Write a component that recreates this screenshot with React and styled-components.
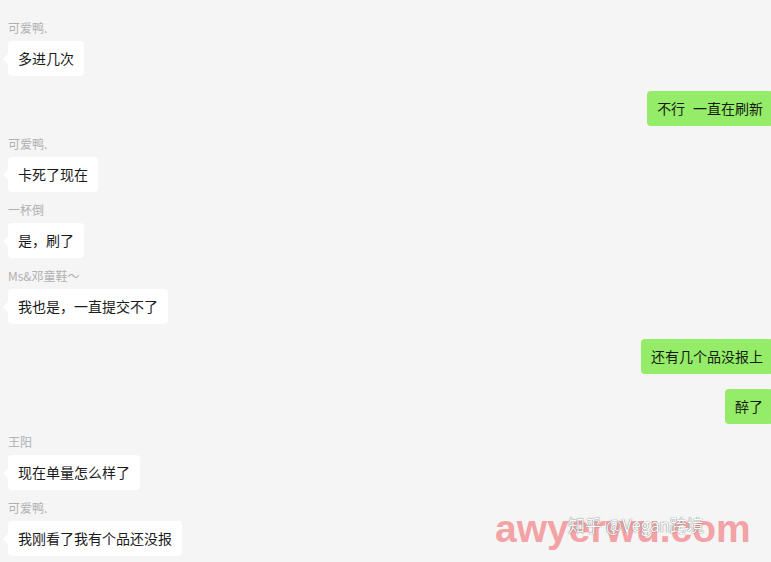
import React from 'react'
import styled, { createGlobalStyle } from 'styled-components'

const GlobalStyle = createGlobalStyle`
  html, body {
    margin: 0;
    padding: 0;
    background: #f5f5f5;
    overflow: hidden;
  }
  body {
    font-family: "Noto Sans CJK SC", "Noto Sans", sans-serif;
  }
`

const messages = [
  { name: '可爱鸭.', text: '多进几次' },
  { self: true, text: '不行\u2002\u200a一直在刷新' },
  { name: '可爱鸭.', text: '卡死了现在' },
  { name: '一杯倒', text: '是，刷了' },
  { name: 'Ms&邓童鞋～', text: '我也是，一直提交不了' },
  { self: true, text: '还有几个品没报上' },
  { self: true, text: '醉了' },
  { name: '王阳', text: '现在单量怎么样了' },
  { name: '可爱鸭.', text: '我刚看了我有个品还没报' },
]

function App() {
  return (
    <Page>
      <GlobalStyle />
      <Chat>
        {messages.map((m, i) => (
          <Row key={i} self={m.self}>
            {m.name && <Name>{m.name}</Name>}
            <Bubble self={m.self}>{m.text}</Bubble>
          </Row>
        ))}
      </Chat>

      <Watermark>awyerwu.com</Watermark>
      <Credit>知乎 @Vegan跨境</Credit>
    </Page>
  )
}

export default App

const Page = styled.div`
    position: relative;
    width: 771px;
    height: 562px;
    background: #f5f5f5;
    overflow: hidden;
`

const Chat = styled.div`
    display: flex;
    flex-direction: column;
    gap: 10px;
    padding: 20px 0 0 8px;
`

const Row = styled.div`
    display: flex;
    flex-direction: column;
    align-items: ${p => (p.self ? 'flex-end' : 'flex-start')};
    margin-top: ${p => (p.self ? '5px' : '0')};
    margin-right: ${p => (p.self ? '-2px' : '0')};
`

const Name = styled.div`
    height: 16px;
    line-height: 16px;
    margin-bottom: 5px;
    font-size: 12px;
    color: #b0b0b0;
`

const Bubble = styled.div`
    position: relative;
    padding: 8px 10px;
    line-height: 19px;
    font-size: 14px;
    color: ${p => (p.self ? '#131a10' : '#1b1b1b')};
    background: ${p => (p.self ? '#95ec69' : '#ffffff')};
    border-radius: 4px;
    white-space: pre;

    &::before {
        content: '';
        position: absolute;
        top: 13px;
        ${p => (p.self ? 'right: -5px;' : 'left: -5px;')}
        border-top: 5px solid transparent;
        border-bottom: 5px solid transparent;
        ${p => (p.self ? 'border-left: 5px solid #95ec69;' : 'border-right: 5px solid #ffffff;')}
    }
`

const Watermark = styled.div`
    position: absolute;
    left: 495px;
    top: 505px;
    font-family: "Liberation Sans", "DejaVu Sans", sans-serif;
    font-weight: 700;
    font-size: 39px;
    line-height: 48px;
    color: #f3a2a5;
`

const Credit = styled.div`
    position: absolute;
    left: 568px;
    top: 513px;
    font-size: 17px;
    line-height: 24px;
    color: #ffffff;
    text-shadow: 0 0 1px #6a6a6a, 0 0 1px #6a6a6a;
    opacity: 0.85;
`
